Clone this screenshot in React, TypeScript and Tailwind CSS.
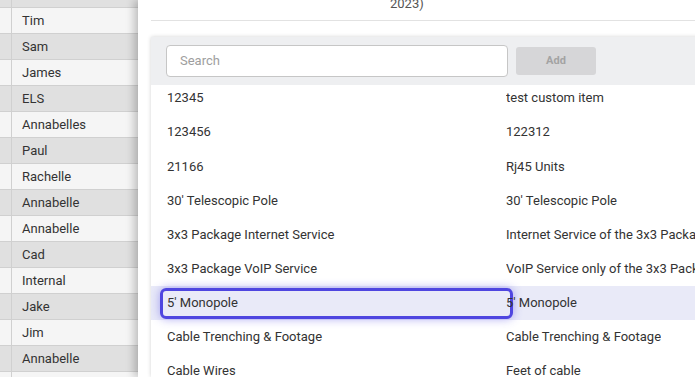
const names = [
  'Tim', 'Sam', 'James', 'ELS', 'Annabelles', 'Paul', 'Rachelle',
  'Annabelle', 'Annabelle', 'Cad', 'Internal', 'Jake', 'Jim', 'Annabelle', '',
];

const items: [string, string][] = [
  ['12345', 'test custom item'],
  ['123456', '122312'],
  ['21166', 'Rj45 Units'],
  ["30' Telescopic Pole", "30' Telescopic Pole"],
  ['3x3 Package Internet Service', 'Internet Service of the 3x3 Package'],
  ['3x3 Package VoIP Service', 'VoIP Service only of the 3x3 Package'],
  ["5' Monopole", "5' Monopole"],
  ['Cable Trenching & Footage', 'Cable Trenching & Footage'],
  ['Cable Wires', 'Feet of cable'],
];

// index of the row that has keyboard focus in the picker
const FOCUSED = 6;

export default function App() {
  return (
    <div
      className="flex h-[377px] w-[695px] overflow-hidden bg-white text-[13px] text-[#333]"
      style={{ fontFamily: 'Roboto, "Liberation Sans", sans-serif' }}
    >
      {/* underlying table, mostly covered by the drawer */}
      <div className="w-[138px] shrink-0">
        <div className="flex h-[8px] border-b border-[#d0d0d0] bg-[#e0e0e0]">
          <div className="w-[12px] border-r border-[#d0d0d0]" />
        </div>
        {names.map((name, i) => (
          <div
            key={i}
            className={`flex h-[26px] border-b border-[#d0d0d0] ${i % 2 === 0 ? 'bg-[#f5f5f5]' : 'bg-[#e0e0e0]'}`}
          >
            <div className="w-[12px] border-r border-[#d0d0d0]" />
            <div className="flex items-center pl-[10px]">{name}</div>
          </div>
        ))}
      </div>

      {/* drawer */}
      <div className="relative z-10 flex flex-1 flex-col bg-white pl-[13px] shadow-[-4px_0_8px_rgba(0,0,0,0.22)]">
        <div className="h-[21px] border-b border-[#e2e2e2]">
          <div className="-mt-[4px] pl-[239px] leading-[16px] text-[#555]">2023)</div>
        </div>

        <div className="mt-[16px] flex flex-1 flex-col overflow-hidden bg-white shadow-[0_0_4px_rgba(0,0,0,0.18)]">
          <div className="relative z-10 flex h-[48px] shrink-0 items-center gap-[8px] bg-[#eeeff1] pl-[15px]">
            <div className="flex h-[32px] w-[342px] items-center rounded-[4px] border border-[#c6c6c6] bg-white pl-[13px] text-[#9e9e9e]">
              Search
            </div>
            <div className="flex h-[28px] w-[80px] items-center justify-center rounded-[3px] bg-[#d6d6d8] text-[11px] font-bold text-[#a3a3a3]">
              Add
            </div>
          </div>

          <div className="-mt-[4px] flex flex-col">
            {items.map(([code, desc], i) => (
              <div
                key={i}
                className={`relative flex h-[34.15px] shrink-0 items-center whitespace-nowrap ${i === FOCUSED ? 'bg-[#e9eaf8]' : ''}`}
              >
                {i === FOCUSED && (
                  <div className="absolute top-[2px] bottom-[1px] left-[9px] w-[353px] rounded-[6px] border-[3px] border-[#4f46e0] shadow-[0_0_10px_rgba(79,70,229,0.45)]" />
                )}
                <div className="w-[355px] shrink-0 pl-[16px]">{code}</div>
                <div className="relative overflow-hidden">{desc}</div>
              </div>
            ))}
          </div>
        </div>
      </div>
    </div>
  );
}
